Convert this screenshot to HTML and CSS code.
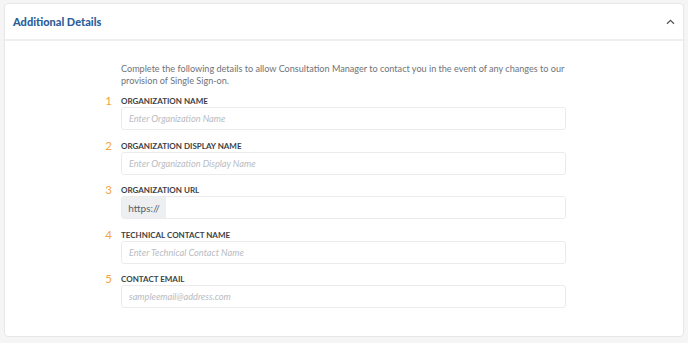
FILE: index.html
```html
<!DOCTYPE html>
<html lang="en">
<head>
    <meta charset="UTF-8">
    <meta name="viewport" content="width=device-width, initial-scale=1.0">
    <title>Additional Details</title>
    <link rel="stylesheet" href="styles.css">
</head>
<body>
    <div class="card">
        <div class="card-header">
            <h2 class="card-title">Additional Details</h2>
            <svg class="chevron" width="9" height="6" viewBox="0 0 9 6">
                <path d="M1 4.8 L4.5 1.4 L8 4.8" fill="none" stroke="#555" stroke-width="1.3"/>
            </svg>
        </div>
        <div class="card-body">
            <div class="form">
                <p class="intro">Complete the following details to allow Consultation Manager to contact you in the event of any changes to our provision of Single Sign-on.</p>

                <div class="field">
                    <span class="step">1</span>
                    <label for="org_name">Organization Name</label>
                    <input type="text" id="org_name" placeholder="Enter Organization Name">
                </div>

                <div class="field">
                    <span class="step">2</span>
                    <label for="org_display">Organization Display Name</label>
                    <input type="text" id="org_display" placeholder="Enter Organization Display Name">
                </div>

                <div class="field">
                    <span class="step">3</span>
                    <label for="org_url">Organization URL</label>
                    <div class="input-group">
                        <span class="addon">https://</span>
                        <input type="text" id="org_url">
                    </div>
                </div>

                <div class="field">
                    <span class="step">4</span>
                    <label for="tech_name">Technical Contact Name</label>
                    <input type="text" id="tech_name" placeholder="Enter Technical Contact Name">
                </div>

                <div class="field">
                    <span class="step">5</span>
                    <label for="email">Contact Email</label>
                    <input type="email" id="email" placeholder="sampleemail@address.com">
                </div>
            </div>
        </div>
    </div>
</body>
</html>
```

FILE: styles.css
```css
body {
    font-family: Lato, "Open Sans", Arial, sans-serif;
    background-color: #f5f5f6;
    color: #333;
    margin: 0;
    padding: 3px 4px 0 4px;
}
.card {
    width: 680px;
    background: #fff;
    border: 1px solid #e7e7e9;
    border-radius: 4px;
    box-sizing: border-box;
}
.card-header {
    height: 37px;
    display: flex;
    align-items: center;
    justify-content: space-between;
    padding: 0 8px 0 8px;
    border-bottom: 2px solid #eeeef0;
    box-sizing: border-box;
}
.card-title {
    margin: 0;
    font-size: 11px;
    font-weight: 900;
    color: #2c5e99;
}
.chevron {
    display: block;
}
.card-body {
    padding: 22px 0 28px 96px;
}
.form {
    width: 465px;
    display: grid;
    grid-template-columns: 20px 445px;
}
.intro {
    grid-column: 2;
    margin: 0 0 -1.5px 0;
    font-size: 9.1px;
    line-height: 12px;
    color: #6f737a;
}
.field {
    grid-column: 1 / 3;
    display: grid;
    grid-template-columns: 20px 445px;
    margin-top: 10.5px;
}
.step {
    grid-row: 1;
    font-size: 11.5px;
    line-height: 9px;
    color: #f2a443;
    text-align: right;
    padding-right: 9px;
}
label {
    grid-row: 1;
    grid-column: 2;
    font-size: 8px;
    line-height: 10px;
    font-weight: bold;
    text-transform: uppercase;
    color: #3b3f45;
    margin-bottom: 1px;
}
input {
    grid-column: 2;
    height: 23px;
    width: 100%;
    border: 1px solid #ebebed;
    border-radius: 3px;
    padding: 0 7px;
    box-sizing: border-box;
    font-family: inherit;
    font-size: 9.2px;
    color: #333;
    outline: none;
}
input::placeholder {
    font-style: italic;
    color: #b9bcc2;
}
.input-group {
    grid-column: 2;
    display: flex;
    height: 23px;
    border: 1px solid #ebebed;
    border-radius: 3px;
    overflow: hidden;
    box-sizing: border-box;
}
.addon {
    width: 44px;
    background: #eeeff1;
    color: #5a5e65;
    font-size: 10px;
    display: flex;
    align-items: center;
    justify-content: center;
}
.input-group input {
    flex: 1;
    height: 100%;
    border: none;
    border-radius: 0;
}
```
